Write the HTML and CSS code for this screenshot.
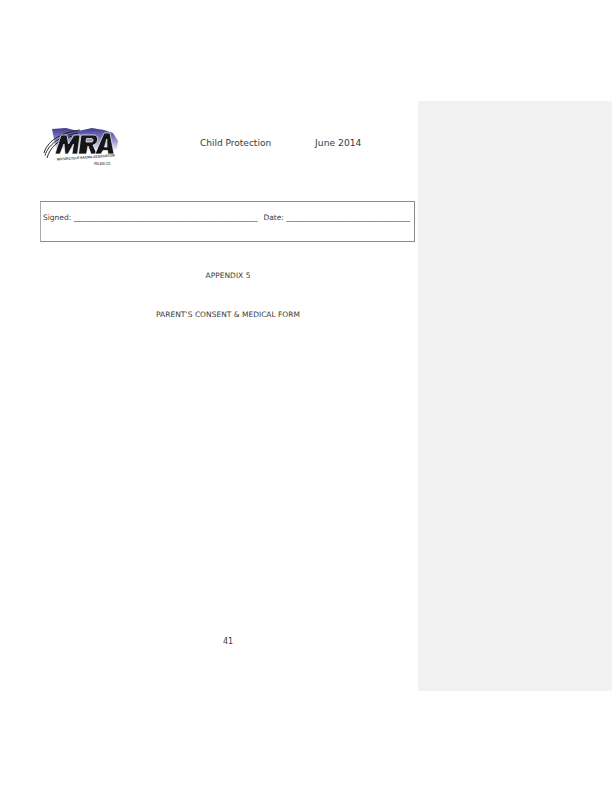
FILE: index.html
```html
<!DOCTYPE html>
<html lang="en">
<head>
<meta charset="utf-8">
<title>Child Protection - Appendix 5</title>
<link rel="stylesheet" href="styles.css">
</head>
<body>
<div class="page">
  <main class="main">
    <header class="header">
      <svg class="logo" viewBox="0 0 80 46" width="80" height="46" aria-label="MRA logo">
        <defs>
          <linearGradient id="sky" x1="0" y1="0" x2="0" y2="1">
            <stop offset="0" stop-color="#3f3a8c"/>
            <stop offset="0.5" stop-color="#8581c6"/>
            <stop offset="1" stop-color="#e4e3f3"/>
          </linearGradient>
          <filter id="soft" x="-5%" y="-5%" width="110%" height="110%"><feGaussianBlur stdDeviation="0.6"/></filter>
        </defs>
        <g filter="url(#soft)">
          <path d="M10 4 L24 3 L36 6 L50 3 L62 5 L71 8 L76 16 L75 24 L14 24 Z" fill="url(#sky)"/>
          <g fill="none" stroke="#111" stroke-width="0.900">
            <path d="M2 28 C5 17 17 8 38 5"/>
            <path d="M3 30.500 C6 20 17 11 36 8"/>
            <path d="M5 33 C8 23 15 15 30 11"/>
          </g>
          <g fill="#161616" stroke="#fff" stroke-width="0.700">
            <path d="M13 29 L19 10 L25 10 L26.500 19 L32 10 L38 10 L35.500 29 L30 29 L31.500 19 L26 29 L23 29 L22 19 L18 29 Z"/>
            <path fill-rule="evenodd" d="M36.500 29 L39 10 L52 10 C57 10 57 19 51 20 L55 29 L49 29 L46 21 L44.500 29 Z M44.500 13.500 L44 17 L49.500 17 C51.500 17 51.500 13.500 49.500 13.500 Z"/>
            <path fill-rule="evenodd" d="M53 29 L62 8 L68 8 L72 29 L66 29 L65.500 25.500 L61 25.500 L59 29 Z M62.500 22 L65 22 L64.800 14 Z"/>
          </g>
        </g>
        <text class="logo-name" x="15" y="35.500" textLength="58" lengthAdjust="spacingAndGlyphs" transform="rotate(-4 15 35.500)">MOTORCYCLE RACING ASSOCIATION</text>
        <text class="logo-sub" x="52" y="39.500" textLength="17" lengthAdjust="spacingAndGlyphs">IRELAND LTD.</text>
      </svg>
      <span class="doc-title">Child Protection</span>
      <span class="doc-date">June 2014</span>
    </header>
    <section class="sign-box">
      <span>Signed: _________________________________________________</span>
      <span>Date: _________________________________</span>
    </section>
    <p class="appendix">APPENDIX 5</p>
    <p class="form-title">PARENT’S CONSENT &amp; MEDICAL FORM</p>
    <p class="page-number">41</p>
  </main>
  <aside class="margin-panel"></aside>
</div>
</body>
</html>
```
FILE: styles.css
```css
html, body {
  margin: 0;
  padding: 0;
  background: #fff;
}

.page {
  display: flex;
  width: 612px;
  height: 792px;
  overflow: hidden;
  font-family: "DejaVu Sans", Verdana, sans-serif;
  color: #3a3a3a;
}

.main {
  width: 418px;
  flex: none;
  padding-top: 125px;
  box-sizing: border-box;
}

.header {
  display: flex;
  align-items: flex-start;
  height: 76px;
  padding-left: 42px;
  box-sizing: border-box;
}

.logo {
  display: block;
  flex: none;
}

.logo-name {
  font-family: "Liberation Sans", sans-serif;
  font-weight: 700;
  font-size: 3.4px;
  fill: #333;
}

.logo-sub {
  font-family: "Liberation Sans", sans-serif;
  font-weight: 700;
  font-size: 3px;
  fill: #666;
}

.doc-title,
.doc-date {
  line-height: 12px;
  margin-top: 12px;
}

.doc-title {
  margin-left: 78px;
  font-size: 9px;
}

.doc-date {
  margin-left: 44px;
  font-size: 9.2px;
}

.sign-box {
  display: flex;
  justify-content: space-between;
  align-items: flex-start;
  width: 375px;
  height: 41px;
  margin-left: 40px;
  padding: 11px 4px 0 2px;
  box-sizing: border-box;
  border: 1px solid #8a8a8a;
  border-left-color: #aaa;
  font-size: 7.5px;
  line-height: 10px;
}

.appendix,
.form-title,
.page-number {
  margin: 0;
  text-align: center;
  font-size: 7.5px;
  line-height: 10px;
}

.appendix {
  margin-top: 29px;
  padding-left: 38px;
}

.form-title {
  margin-top: 29px;
  padding-left: 38px;
}

.page-number {
  margin-top: 317px;
  padding-left: 38px;
  font-size: 8px;
}

.margin-panel {
  flex: none;
  width: 194px;
  height: 590px;
  margin-top: 101px;
  background: #f2f2f2;
}
```
